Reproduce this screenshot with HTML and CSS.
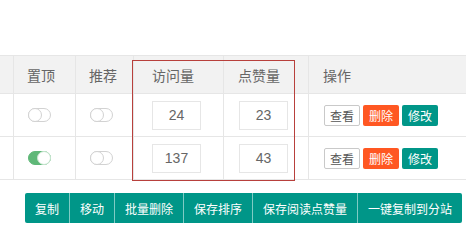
FILE: index.html
```html
<!DOCTYPE html>
<html lang="zh-CN">
<head>
<meta charset="utf-8">
<link rel="stylesheet" href="styles.css">
</head>
<body>
<div class="page">
  <div class="table">
    <div class="cell head c0"></div>
    <div class="cell head c1">置顶</div>
    <div class="cell head c2">推荐</div>
    <div class="cell head c3">访问量</div>
    <div class="cell head c4">点赞量</div>
    <div class="cell head c5">操作</div>

    <div class="cell row c0"></div>
    <div class="cell row c1"><span class="switch"><i></i></span></div>
    <div class="cell row c2"><span class="switch"><i></i></span></div>
    <div class="cell row c3"><span class="num">24</span></div>
    <div class="cell row c4"><span class="num">23</span></div>
    <div class="cell row c5"><span class="btn plain">查看</span><span class="btn danger">删除</span><span class="btn primary">修改</span></div>

    <div class="cell row c0"></div>
    <div class="cell row c1"><span class="switch on"><i></i></span></div>
    <div class="cell row c2"><span class="switch"><i></i></span></div>
    <div class="cell row c3"><span class="num">137</span></div>
    <div class="cell row c4"><span class="num">43</span></div>
    <div class="cell row c5"><span class="btn plain">查看</span><span class="btn danger">删除</span><span class="btn primary">修改</span></div>
  </div>
  <div class="group">
    <span class="gbtn">复制</span><span class="gbtn">移动</span><span class="gbtn">批量删除</span><span class="gbtn">保存排序</span><span class="gbtn">保存阅读点赞量</span><span class="gbtn">一键复制到分站</span>
  </div>
  <div class="mark"></div>
</div>
</body>
</html>
```
FILE: styles.css
```css
* { box-sizing: border-box; }
html, body { margin: 0; padding: 0; background: #fff; }
body {
  font-family: "Noto Sans CJK SC", "Noto Sans", sans-serif;
  color: #666;
  width: 466px;
  height: 229px;
  overflow: hidden;
}
.page { position: relative; padding-top: 55px; }
.table {
  display: grid;
  grid-template-columns: 14px 62px 58px 90px 85px 1fr;
  border-top: 1px solid #e6e6e6;
  width: 480px;
}
.cell {
  display: flex;
  align-items: center;
  border-right: 1px solid #e6e6e6;
  border-bottom: 1px solid #e6e6e6;
}
.head { height: 38px; background: #f2f2f2; font-size: 14px; color: #666; }
.row { height: 43px; }
.c1, .c2 { padding-left: 13px; }
.c1.row, .c2.row { padding-left: 14px; }
.c3 { padding-left: 18px; }
.c4 { padding-left: 14px; }
.c4.row { padding-left: 15px; }
.c5 { padding-left: 14px; }
.c5.row { padding-left: 15px; gap: 3px; }

.switch {
  position: relative;
  width: 23px;
  height: 14px;
  border: 1px solid #d2d2d2;
  border-radius: 8px;
  background: #fff;
}
.switch i {
  position: absolute;
  left: -1px;
  top: -1px;
  width: 14px;
  height: 14px;
  border: 1px solid #d2d2d2;
  border-radius: 50%;
  background: #fff;
}
.switch.on { background: #5fb878; border-color: #5fb878; }
.switch.on i { left: auto; right: -1px; border-color: #c8e6d0; }

.num {
  width: 49px;
  height: 29px;
  border: 1px solid #e6e6e6;
  display: flex;
  align-items: center;
  justify-content: center;
  font-family: "Liberation Sans", Arial, sans-serif;
  font-size: 14px;
  color: #666;
}

.btn {
  height: 21px;
  width: 36px;
  display: inline-flex;
  align-items: center;
  justify-content: center;
  font-size: 12px;
  border-radius: 2px;
  color: #fff;
}
.btn.plain { background: #fff; border: 1px solid #c9c9c9; color: #555; }
.btn.danger { background: #ff5722; }
.btn.primary { background: #009688; }

.group {
  display: flex;
  margin: 13px 0 0 25px;
  width: max-content;
  border-radius: 2px;
  overflow: hidden;
}
.gbtn {
  height: 30px;
  display: inline-flex;
  align-items: center;
  padding: 0 10px;
  background: #009688;
  color: #fff;
  font-size: 12px;
}
.gbtn + .gbtn { border-left: 1px solid rgba(255,255,255,.5); }

.mark {
  position: absolute;
  left: 132px;
  top: 60px;
  width: 163px;
  height: 121px;
  border: 1px solid #b8403c;
  pointer-events: none;
}
```
